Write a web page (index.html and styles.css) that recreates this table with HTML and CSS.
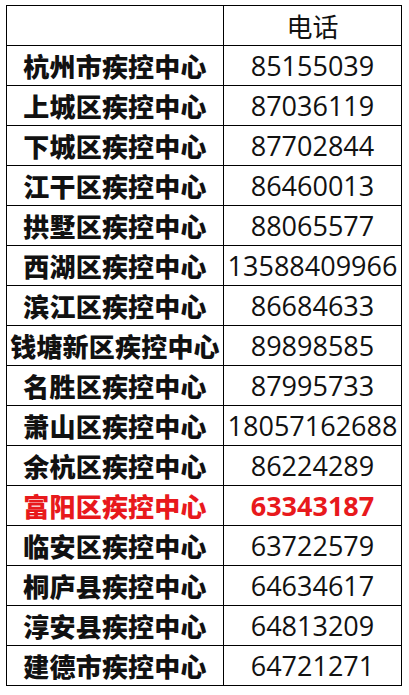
FILE: index.html
```html
<!DOCTYPE html>
<html lang="zh-CN">
<head>
<meta charset="utf-8">
<title>疾控中心电话</title>
<link rel="stylesheet" href="styles.css">
</head>
<body>
<table class="phones">
  <colgroup><col class="c-name"><col class="c-tel"></colgroup>
  <thead>
    <tr><th class="name"></th><th class="tel head">电话</th></tr>
  </thead>
  <tbody>
    <tr><td class="name">杭州市疾控中心</td><td class="tel">85155039</td></tr>
    <tr><td class="name">上城区疾控中心</td><td class="tel">87036119</td></tr>
    <tr><td class="name">下城区疾控中心</td><td class="tel">87702844</td></tr>
    <tr><td class="name">江干区疾控中心</td><td class="tel">86460013</td></tr>
    <tr><td class="name">拱墅区疾控中心</td><td class="tel">88065577</td></tr>
    <tr><td class="name">西湖区疾控中心</td><td class="tel">13588409966</td></tr>
    <tr><td class="name">滨江区疾控中心</td><td class="tel">86684633</td></tr>
    <tr><td class="name">钱塘新区疾控中心</td><td class="tel">89898585</td></tr>
    <tr><td class="name">名胜区疾控中心</td><td class="tel">87995733</td></tr>
    <tr><td class="name">萧山区疾控中心</td><td class="tel">18057162688</td></tr>
    <tr><td class="name">余杭区疾控中心</td><td class="tel">86224289</td></tr>
    <tr class="hl"><td class="name">富阳区疾控中心</td><td class="tel">63343187</td></tr>
    <tr><td class="name">临安区疾控中心</td><td class="tel">63722579</td></tr>
    <tr><td class="name">桐庐县疾控中心</td><td class="tel">64634617</td></tr>
    <tr><td class="name">淳安县疾控中心</td><td class="tel">64813209</td></tr>
    <tr><td class="name">建德市疾控中心</td><td class="tel">64721271</td></tr>
  </tbody>
</table>
</body>
</html>
```

FILE: styles.css
```css
html, body {
  margin: 0;
  padding: 0;
  background: #fff;
}
body {
  padding: 5px 0 0 6px;
}
.phones {
  border-collapse: collapse;
  table-layout: fixed;
  width: 395px;
  color: #111;
}
.c-name { width: 217px; }
.c-tel { width: 178px; }
.phones th, .phones td {
  border: 1px solid #000;
  height: 39px;
  padding: 0;
  text-align: center;
  vertical-align: middle;
  white-space: nowrap;
  overflow: visible;
}
.name {
  font-family: "Noto Sans CJK SC", sans-serif;
  font-weight: 900;
  font-size: 26px;
  letter-spacing: 0.2px;
  line-height: 1;
  padding-top: 3px;
}
.tel {
  font-family: "Open Sans", "Noto Sans", sans-serif;
  font-weight: 400;
  font-size: 27px;
  line-height: 1;
  padding-top: 2px;
}
.tel.head {
  font-family: "Noto Sans CJK SC", sans-serif;
  font-weight: 400;
  font-size: 26px;
}
.hl td {
  color: #e8191c;
  font-weight: 700;
}
.hl td.name {
  font-weight: 900;
}
```
